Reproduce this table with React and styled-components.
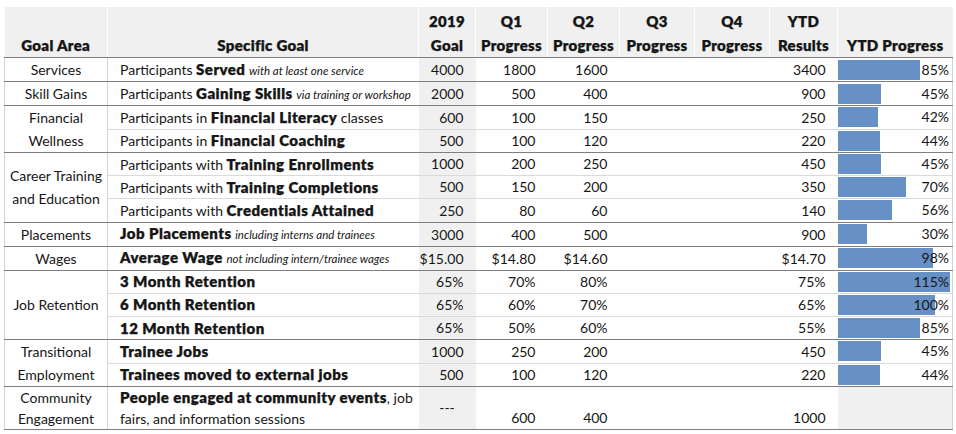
import styled, {createGlobalStyle} from 'styled-components';

const GlobalStyle = createGlobalStyle`
body {
  margin: 0;
  background: #fff;
  font-family: Lato, "Liberation Sans", sans-serif;
  color: #161616;
}
b {
  font-weight: 800;
  font-size: 15px;
  letter-spacing: 0.45px;
  -webkit-text-stroke: 0.25px #161616;
}
`;

const Page = styled.div`
padding: 7px 4px;
`;

const Table = styled.table`
width: 948px;
border-collapse: collapse;
table-layout: fixed;
font-size: 14px;
`;

const Th = styled.th`
background: #f0f0f0;
font-weight: 800;
font-size: 15px;
letter-spacing: 0.3px;
-webkit-text-stroke: 0.25px #161616;
text-align: center;
vertical-align: bottom;
line-height: 24px;
height: 50px;
padding: 0;
white-space: nowrap;
border-left: 1px solid #fff;
border-bottom: 1px solid #7f7f7f;
&:first-child {
  border-left: none;
}
`;

const Row = styled.tr`
height: ${p => p.$tall ? '42px' : '23.2px'};
`;

const Td = styled.td`
padding: 0;
line-height: 20px;
white-space: nowrap;
border-bottom: 1px solid ${p => p.$last ? '#7f7f7f' : '#dadada'};
background: ${p => p.$shade ? '#f0f0f0' : '#fff'};
`;

const AreaCell = styled(Td)`
text-align: center;
vertical-align: middle;
line-height: ${p => p.$tall ? '21px' : '23px'};
border-left: 1px solid #d4d4d4;
border-right: 1px solid #d4d4d4;
border-bottom-color: #7f7f7f;
`;

const GoalCell = styled(Td)`
padding-left: 12px;
vertical-align: middle;
line-height: ${p => p.$tall ? '21px' : '20px'};
`;

const NumCell = styled(Td)`
text-align: ${p => p.$center ? 'center' : 'right'};
padding-right: ${p => p.$center ? '0' : '12px'};
vertical-align: ${p => p.$center ? 'middle' : 'bottom'};
padding-bottom: ${p => p.$center ? '0' : '1px'};
`;

const BarCell = styled(Td)`
border-right: 1px solid #d4d4d4;
vertical-align: middle;
`;

const BarWrap = styled.div`
position: relative;
height: 20px;
display: flex;
align-items: center;
justify-content: flex-end;
padding-right: 3px;
`;

const Bar = styled.div`
position: absolute;
left: 0;
top: 0;
bottom: 0;
background: #6690c6;
`;

const Pct = styled.span`
position: relative;
`;

const Note = styled.i`
font-size: 11.5px;
`;

const headers = [
  ['', 'Goal Area'],
  ['', 'Specific Goal'],
  ['2019', 'Goal'],
  ['Q1', 'Progress'],
  ['Q2', 'Progress'],
  ['Q3', 'Progress'],
  ['Q4', 'Progress'],
  ['YTD', 'Results'],
  ['', 'YTD Progress'],
];

const widths = [103, 311, 57, 72, 72, 75, 75, 68, 115];

const groups = [
  {area: ['Services'], rows: [
    {goal: <>Participants <b>Served</b> <Note>with at least one service</Note></>, g: '4000', q1: '1800', q2: '1600', ytd: '3400', pct: 85},
  ]},
  {area: ['Skill Gains'], rows: [
    {goal: <>Participants <b>Gaining Skills</b> <Note>via training or workshop</Note></>, g: '2000', q1: '500', q2: '400', ytd: '900', pct: 45},
  ]},
  {area: ['Financial', 'Wellness'], rows: [
    {goal: <>Participants in <b>Financial Literacy</b> classes</>, g: '600', q1: '100', q2: '150', ytd: '250', pct: 42},
    {goal: <>Participants in <b>Financial Coaching</b></>, g: '500', q1: '100', q2: '120', ytd: '220', pct: 44},
  ]},
  {area: ['Career Training', 'and Education'], rows: [
    {goal: <>Participants with <b>Training Enrollments</b></>, g: '1000', q1: '200', q2: '250', ytd: '450', pct: 45},
    {goal: <>Participants with <b>Training Completions</b></>, g: '500', q1: '150', q2: '200', ytd: '350', pct: 70},
    {goal: <>Participants with <b>Credentials Attained</b></>, g: '250', q1: '80', q2: '60', ytd: '140', pct: 56},
  ]},
  {area: ['Placements'], rows: [
    {goal: <><b>Job Placements</b> <Note>including interns and trainees</Note></>, g: '3000', q1: '400', q2: '500', ytd: '900', pct: 30},
  ]},
  {area: ['Wages'], rows: [
    {goal: <><b>Average Wage</b> <Note>not including intern/trainee wages</Note></>, g: '$15.00', q1: '$14.80', q2: '$14.60', ytd: '$14.70', pct: 98},
  ]},
  {area: ['Job Retention'], rows: [
    {goal: <b>3 Month Retention</b>, g: '65%', q1: '70%', q2: '80%', ytd: '75%', pct: 115},
    {goal: <b>6 Month Retention</b>, g: '65%', q1: '60%', q2: '70%', ytd: '65%', pct: 100},
    {goal: <b>12 Month Retention</b>, g: '65%', q1: '50%', q2: '60%', ytd: '55%', pct: 85},
  ]},
  {area: ['Transitional', 'Employment'], rows: [
    {goal: <b>Trainee Jobs</b>, g: '1000', q1: '250', q2: '200', ytd: '450', pct: 45},
    {goal: <b>Trainees moved to external jobs</b>, g: '500', q1: '100', q2: '120', ytd: '220', pct: 44},
  ]},
];

function App() {
  return (
    <Page>
      <GlobalStyle/>
      <Table>
        <colgroup>
          {widths.map((w, i) => <col key={i} style={{width: w}}/>)}
        </colgroup>
        <thead>
          <tr>
            {headers.map((h, i) => (
              <Th key={i}>{h[0] && <>{h[0]}<br/></>}{h[1]}</Th>
            ))}
          </tr>
        </thead>
        <tbody>
          {groups.map((grp, gi) => grp.rows.map((r, ri) => {
            const last = ri === grp.rows.length - 1;
            return (
              <Row key={gi + '-' + ri}>
                {ri === 0 && (
                  <AreaCell rowSpan={grp.rows.length} $last>
                    {grp.area.map((a, ai) => <div key={ai}>{a}</div>)}
                  </AreaCell>
                )}
                <GoalCell $last={last}>{r.goal}</GoalCell>
                <NumCell $last={last} $shade>{r.g}</NumCell>
                <NumCell $last={last}>{r.q1}</NumCell>
                <NumCell $last={last}>{r.q2}</NumCell>
                <NumCell $last={last}/>
                <NumCell $last={last}/>
                <NumCell $last={last}>{r.ytd}</NumCell>
                <BarCell $last={last}>
                  <BarWrap>
                    <Bar style={{width: Math.min(r.pct * 0.975, 112)}}/>
                    <Pct>{r.pct}%</Pct>
                  </BarWrap>
                </BarCell>
              </Row>
            );
          }))}
          <Row $tall>
            <AreaCell $last $tall>
              <div>Community</div>
              <div>Engagement</div>
            </AreaCell>
            <GoalCell $last $tall>
              <b>People engaged at community events</b>, job<br/>
              fairs, and information sessions
            </GoalCell>
            <NumCell $last $shade $center>---</NumCell>
            <NumCell $last>600</NumCell>
            <NumCell $last>400</NumCell>
            <NumCell $last/>
            <NumCell $last/>
            <NumCell $last>1000</NumCell>
            <BarCell $last $shade/>
          </Row>
        </tbody>
      </Table>
    </Page>
  );
}

export default App;
